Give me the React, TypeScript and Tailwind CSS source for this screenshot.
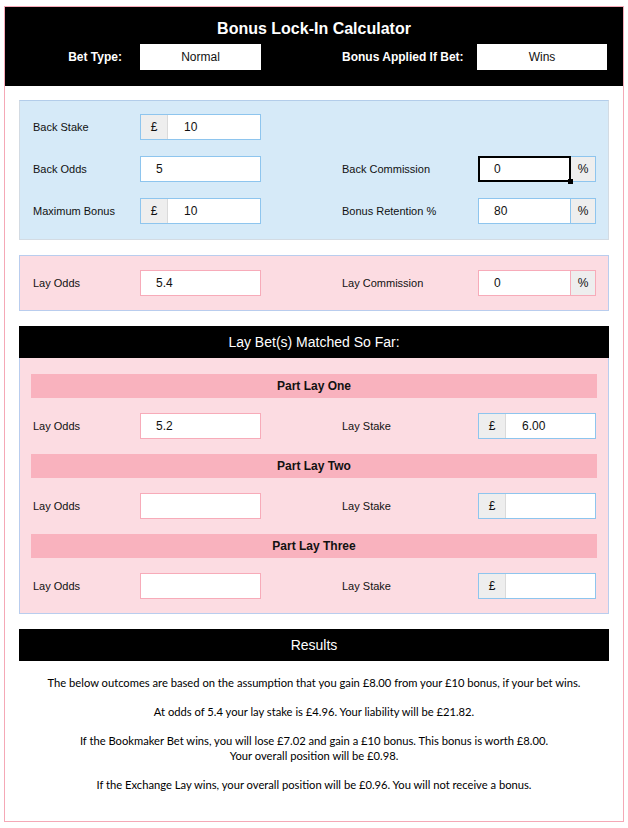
import type { ReactNode } from 'react'

type Tone = 'blue' | 'pink'

const edge: Record<Tone, string> = {
  blue: 'border-[#8ec5ee]',
  pink: 'border-[#f7abb9]',
}

function Label({ children, wide }: { children: ReactNode; wide?: boolean }) {
  return <div className={`${wide ? 'w-[136px]' : 'w-[107px]'} shrink-0 text-[11px]`}>{children}</div>
}

function Plain({ value, tone }: { value?: string; tone: Tone }) {
  return (
    <div className={`flex h-[26px] w-[121px] shrink-0 items-center border bg-white pl-[15px] ${edge[tone]}`}>
      {value}
    </div>
  )
}

function Money({ value, tone, w = 'w-[121px]' }: { value?: string; tone: Tone; w?: string }) {
  return (
    <div className={`flex h-[26px] shrink-0 border bg-white ${w} ${edge[tone]}`}>
      <div className="flex w-[27px] items-center justify-center border-r border-[#dadada] bg-[#eeeeee]">£</div>
      <div className="flex flex-1 items-center pl-[16px]">{value}</div>
    </div>
  )
}

function Percent({ value, tone, active }: { value: string; tone: Tone; active?: boolean }) {
  return (
    <div className="flex h-[26px] w-[118px] shrink-0">
      {active ? (
        // selected cell: heavy outline plus the little drag handle
        <div className="relative flex w-[93px] items-center border-2 border-black bg-white pl-[14px]">
          {value}
          <span className="absolute -bottom-[4px] -right-[4px] h-[5px] w-[5px] bg-black" />
        </div>
      ) : (
        <div className={`flex w-[93px] items-center border bg-white pl-[15px] ${edge[tone]}`}>{value}</div>
      )}
      <div className={`flex flex-1 items-center justify-center border border-l-0 bg-[#eeeeee] ${edge[tone]}`}>%</div>
    </div>
  )
}

function Row({ children }: { children: ReactNode }) {
  return <div className="flex h-[26px] items-center">{children}</div>
}

function Gap() {
  return <div className="w-[81px] shrink-0" />
}

function PartLay({ title, odds, stake }: { title: string; odds?: string; stake?: string }) {
  return (
    <>
      <div className="flex h-[24px] items-center justify-center bg-[#f9b2be] font-bold">{title}</div>
      <div className="flex h-[26px] items-center pl-[2px]">
        <Label>Lay Odds</Label>
        <Plain value={odds} tone="pink" />
        <Gap />
        <Label wide>Lay Stake</Label>
        <Money value={stake} tone="blue" w="w-[118px]" />
      </div>
    </>
  )
}

export default function App() {
  return (
    <div className="bg-white pb-[8px] pl-[4px] pt-[6px] font-['Liberation_Sans',Arial,sans-serif] text-[12px] text-[#111]">
      <div className="w-[620px] border border-[#f5a8b6] pb-[29px]">
        <header className="flex h-[79px] flex-col bg-black text-white">
          <h1 className="mt-[12px] text-center text-[16px] font-bold leading-[20px]">Bonus Lock-In Calculator</h1>
          <div className="mt-[5px] flex h-[26px] items-center pl-[28px] font-bold">
            <div className="w-[107px] pr-[18px] text-right">Bet Type:</div>
            <div className="flex h-[26px] w-[121px] items-center justify-center bg-white font-normal text-[#111]">Normal</div>
            <div className="w-[81px]" />
            <div className="w-[135px]">Bonus Applied If Bet:</div>
            <div className="flex h-[26px] w-[130px] items-center justify-center bg-white font-normal text-[#111]">Wins</div>
          </div>
        </header>

        <div className="flex flex-col gap-[15px] px-[14px] pt-[14px]">
          <section className="flex flex-col gap-[16px] border border-[#d3dbe3] border-t-[#b3cdea] bg-[#d6eaf8] pb-[15px] pl-[13px] pt-[13px]">
            <Row>
              <Label>Back Stake</Label>
              <Money value="10" tone="blue" />
            </Row>
            <Row>
              <Label>Back Odds</Label>
              <Plain value="5" tone="blue" />
              <Gap />
              <Label wide>Back Commission</Label>
              <Percent value="0" tone="blue" active />
            </Row>
            <Row>
              <Label>Maximum Bonus</Label>
              <Money value="10" tone="blue" />
              <Gap />
              <Label wide>Bonus Retention %</Label>
              <Percent value="80" tone="blue" />
            </Row>
          </section>

          <section className="border border-[#b9cdee] bg-[#fcdce2] py-[14px] pl-[13px]">
            <Row>
              <Label>Lay Odds</Label>
              <Plain value="5.4" tone="pink" />
              <Gap />
              <Label wide>Lay Commission</Label>
              <Percent value="0" tone="pink" />
            </Row>
          </section>

          <section>
            <div className="flex h-[32px] items-center justify-center bg-black text-[14px] text-white">Lay Bet(s) Matched So Far:</div>
            <div className="flex flex-col gap-[15px] border border-t-0 border-[#b9cdee] bg-[#fcdce2] px-[11px] pb-[14px] pt-[16px]">
              <PartLay title="Part Lay One" odds="5.2" stake="6.00" />
              <PartLay title="Part Lay Two" />
              <PartLay title="Part Lay Three" />
            </div>
          </section>

          <section>
            <div className="flex h-[32px] items-center justify-center bg-black text-[14px] text-white">Results</div>
            <div className="mt-[14px] flex flex-col gap-[14px] text-center font-['Lato',sans-serif] text-[11.2px] leading-[15px] text-black">
              <p>The below outcomes are based on the assumption that you gain £8.00 from your £10 bonus, if your bet wins.</p>
              <p>At odds of 5.4 your lay stake is £4.96. Your liability will be £21.82.</p>
              <p>
                If the Bookmaker Bet wins, you will lose £7.02 and gain a £10 bonus. This bonus is worth £8.00.
                <br />
                Your overall position will be £0.98.
              </p>
              <p>If the Exchange Lay wins, your overall position will be £0.96. You will not receive a bonus.</p>
            </div>
          </section>
        </div>
      </div>
    </div>
  )
}
